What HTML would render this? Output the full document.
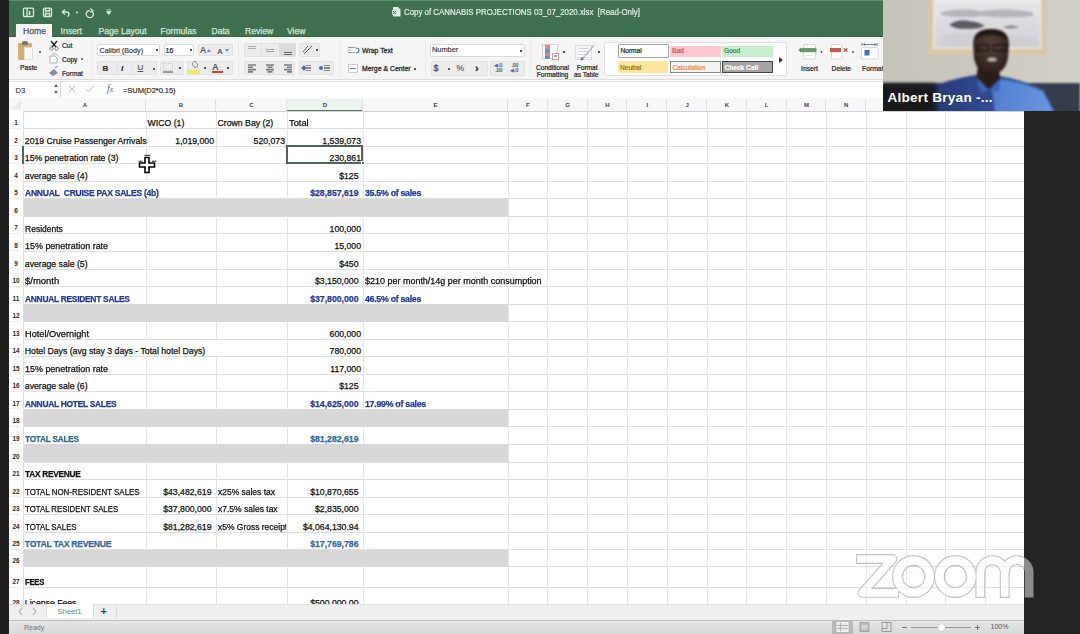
<!DOCTYPE html>
<html><head><meta charset="utf-8">
<style>
*{margin:0;padding:0;box-sizing:border-box}
html,body{width:1080px;height:634px;overflow:hidden;background:#fff;font-family:'Liberation Sans',sans-serif;}
.ab{position:absolute}
#leftstrip{position:absolute;left:0;top:0;width:9px;height:634px;background:#202020}
#title{position:absolute;left:9px;top:0;width:874px;height:37px;background:#3f7150;border-top:1px solid #5e9070;border-bottom:1px solid #33603f}
.tab{position:absolute;top:26px;font-size:8.6px;color:#d3e4d7;white-space:nowrap;-webkit-text-stroke:.25px currentColor}
#hometab{position:absolute;left:16px;top:24px;width:36px;height:14px;background:#f5f5f5}
#ribbon{position:absolute;left:9px;top:37px;width:1015px;height:43px;background:#f5f5f5;border-bottom:1px solid #dcdcdc}
.rt{position:absolute;font-size:6.8px;color:#222;white-space:nowrap;-webkit-text-stroke:.2px currentColor}
.box{position:absolute;background:#fff;border:1px solid #dadada;border-radius:2px}
.btn{position:absolute;background:#ececec;border:1px solid #e0e0e0;border-radius:2px}
#fbar{position:absolute;left:9px;top:80.5px;width:1015px;height:18px;background:#fff;border-top:1px solid #e4e4e4;border-bottom:1.5px solid #bdbdbd}
.fbt{position:absolute;font-size:7.6px;color:#111;white-space:nowrap;top:5px;-webkit-text-stroke:.25px currentColor}
#colhdr{position:absolute;left:9px;top:98px;width:1015px;height:13.5px;background:#f8f8f8;border-bottom:1px solid #d0d0d0}
.cn{position:absolute;top:101.5px;font-size:6px;color:#444;text-align:center;font-weight:bold}
.chl{position:absolute;top:99px;height:12px;width:1px;background:#e2e2e2}
#rowhdr{position:absolute;left:9px;top:111px;width:15px;height:497px;background:#fdfdfd;border-right:1px solid #dcdcdc}
.rn{position:absolute;left:9px;width:14px;font-size:6.4px;color:#2a2a2a;text-align:center;line-height:8px;font-weight:bold}
.rhl{position:absolute;left:9px;width:15px;height:1px;background:#f0f0f0}
.hl{position:absolute;left:24px;width:1000px;height:1px;background:#dedede}
.vl{position:absolute;top:111px;height:497px;width:1px;background:#e5e5e5}
.gr{position:absolute;left:24px;width:483.5px;background:#d7d7d7}
.c{position:absolute;font-size:8.7px;color:#111;white-space:nowrap;line-height:11px;-webkit-text-stroke:.25px currentColor}
.cover{position:absolute;background:#fff}
#tabs{position:absolute;left:9px;top:604px;width:1015px;height:16px;background:#efefef;border-top:1px solid #e0e0e0}
#status{position:absolute;left:9px;top:619.7px;width:1015px;height:14.3px;background:linear-gradient(#e6e6e6,#d9d9d9);border-top:1.2px solid #bcbcbc}
#rightdark{position:absolute;left:1024px;top:111px;width:56px;height:523px;background:#232323}
#video{position:absolute;left:883px;top:0;width:197px;height:111px;overflow:hidden;background:#c9c2b6}
</style></head><body>
<div id="leftstrip"></div>
<div id="title">
</div>
<svg class="ab" style="left:22px;top:6.5px" width="92" height="11" viewBox="0 0 92 11">
<g fill="none" stroke="#d9ebdd" stroke-width="1.3">
<rect x="1.5" y="1.2" width="10" height="8.3" rx="1"/><path d="M5 1.2v8.3"/><path d="M7.5 4v4" stroke-width="1.6"/>
<rect x="21.5" y="1.2" width="8" height="8.3" rx="1"/><path d="M23.5 1.2v2.8h4V1.2 M23.5 9.5V6.5h4v3"/>
<path d="M40 5 l3 -2.5 M40 5 l3 2.5 M40.5 5 h4 q2.5 0 2.5 2.5 q0 1.5 -1.5 2"/>
<path d="M67.5 3.5 a3.6 3.6 0 1 0 3 1.2 M68.5 1.5 l2.2 2.4 l-2.6 1.2"/>
</g>
<path d="M53.5 4.8 h3 l-1.5 2z" fill="#d9ebdd"/>
<path d="M84.5 2.8 h4.5 M84.5 4.6 h4.5 l-2.25 3z" stroke="#d9ebdd" stroke-width=".8" fill="#d9ebdd"/>
</svg>
<svg class="ab" style="left:392px;top:6px" width="9" height="11" viewBox="0 0 9 11"><path d="M1 1 h5 l2.5 2.5 v7 h-7.5z" fill="#e8efe9"/><rect x="0" y="4" width="5" height="5" fill="#cfdcd2"/><path d="M1 5 l3 3 M4 5 l-3 3" stroke="#3d6e4e" stroke-width=".8"/></svg>
<div id="hometab"></div>
<div class="tab" style="left:23px;color:#555">Home</div>
<div class="tab" style="left:60.5px">Insert</div>
<div class="tab" style="left:98.5px">Page Layout</div>
<div class="tab" style="left:160.5px">Formulas</div>
<div class="tab" style="left:211.5px">Data</div>
<div class="tab" style="left:245px">Review</div>
<div class="tab" style="left:287px">View</div>
<div class="ab" style="left:403.5px;top:7px;font-size:8.8px;color:#e3ece5;white-space:nowrap;transform:scaleX(.895);transform-origin:0 0;-webkit-text-stroke:.2px currentColor">Copy of CANNABIS PROJECTIONS 03_07_2020.xlsx&nbsp; [Read-Only]</div>

<div id="ribbon"></div>
<!-- paste -->
<div class="ab" style="left:18px;top:43px;width:14px;height:17px;background:#d7ad6a;border-radius:1px"></div>
<div class="ab" style="left:22px;top:41px;width:6px;height:4px;background:#777;border-radius:2px 2px 0 0"></div>
<div class="ab" style="left:24px;top:47px;width:9px;height:13px;background:#fafafa;border:1px solid #ddd"></div>
<div class="ab" style="left:39px;top:51px;width:2px;height:2px;background:#555;border-radius:1px"></div>
<div class="rt" style="left:20px;top:64px">Paste</div>
<!-- cut copy format -->
<svg class="ab" style="left:48px;top:40px" width="12" height="11" viewBox="0 0 12 11"><path d="M3 1 L8 7 M9 1 L4 7" stroke="#222" stroke-width="1.3" fill="none"/><circle cx="3.5" cy="8.5" r="1.6" fill="none" stroke="#666" stroke-width=".8"/><circle cx="8.5" cy="8.5" r="1.6" fill="none" stroke="#666" stroke-width=".8"/></svg>
<div class="rt" style="left:62px;top:42.2px;font-size:6.6px">Cut</div>
<svg class="ab" style="left:48px;top:53px" width="12" height="11" viewBox="0 0 12 11"><path d="M2 3 h5 l2 2 v5 h-7z" fill="#fff" stroke="#999" stroke-width=".8"/><path d="M4 1 h4 l2 2" fill="none" stroke="#aaa" stroke-width=".8"/></svg>
<div class="rt" style="left:62px;top:56.2px;font-size:6.6px">Copy</div>
<div class="ab" style="left:81px;top:58px;width:2px;height:2px;background:#555;border-radius:1px"></div>
<svg class="ab" style="left:48px;top:66px" width="12" height="11" viewBox="0 0 12 11"><path d="M1 7 L6 3 L10 7 L5 10z" fill="#8a86a8"/><path d="M7 2 L10 0" stroke="#999" stroke-width="1.2"/></svg>
<div class="rt" style="left:62px;top:70px;font-size:6.6px">Format</div>
<div class="ab" style="left:92px;top:40px;width:1px;height:37px;background:#ebebeb"></div>
<!-- font -->
<div class="box" style="left:97px;top:43.5px;width:63px;height:12.5px"></div>
<div class="rt" style="left:99.5px;top:46px;font-size:7.2px;color:#333;-webkit-text-stroke:.15px currentColor">Calibri (Body)</div>
<div class="ab" style="left:155.5px;top:49px;width:2px;height:2px;background:#555"></div>
<div class="box" style="left:163.5px;top:43.5px;width:30.5px;height:12.5px"></div>
<div class="rt" style="left:165.5px;top:46px;font-size:7.2px">16</div>
<div class="ab" style="left:189.5px;top:49px;width:2px;height:2px;background:#555"></div>
<div class="btn" style="left:198px;top:43.5px;width:34.5px;height:12.5px"></div>
<div class="rt" style="left:200px;top:45px;font-size:9px;color:#444">A</div>
<div class="ab" style="left:207px;top:48.5px;width:0;height:0;border-left:2px solid transparent;border-right:2px solid transparent;border-bottom:3px solid #5b8ac6"></div>
<div class="rt" style="left:217.5px;top:46.5px;font-size:7.5px;color:#444">A</div>
<div class="ab" style="left:224.5px;top:49px;width:0;height:0;border-left:2px solid transparent;border-right:2px solid transparent;border-top:3px solid #5b8ac6"></div>
<div class="btn" style="left:97px;top:60.5px;width:59.5px;height:14.5px"></div>
<div class="ab" style="left:117px;top:61px;width:1px;height:14px;background:#e2e2e2"></div>
<div class="ab" style="left:132px;top:61px;width:1px;height:14px;background:#e2e2e2"></div>
<div class="rt" style="left:102.5px;top:63.5px;font-size:8px;font-weight:bold;color:#333">B</div>
<div class="rt" style="left:121px;top:63.5px;font-size:8px;font-style:italic;font-weight:bold;color:#333">I</div>
<div class="rt" style="left:137.5px;top:63px;font-size:8px;color:#555;text-decoration:underline">U</div>
<div class="ab" style="left:152.5px;top:67.5px;width:2px;height:2px;background:#555"></div>
<div class="btn" style="left:160px;top:60.5px;width:23.5px;height:14.5px"></div>
<div class="ab" style="left:163px;top:71px;width:10px;height:1.5px;background:#999"></div>
<div class="ab" style="left:163px;top:63px;width:10px;height:8px;border:1px dotted #ccc"></div>
<div class="ab" style="left:179px;top:67px;width:2px;height:2px;background:#555"></div>
<div class="btn" style="left:187px;top:60.5px;width:45.5px;height:14.5px"></div>
<svg class="ab" style="left:188px;top:61px" width="13" height="10" viewBox="0 0 13 10"><path d="M4 3 L7 0 L10 4 L7 7 z" fill="#eee" stroke="#666" stroke-width=".8"/><path d="M9 5 q2 2 1 3" fill="#4a7fcf"/></svg>
<div class="ab" style="left:188px;top:70px;width:12px;height:4px;background:#f2ea5e"></div>
<div class="ab" style="left:204px;top:67px;width:2px;height:2px;background:#555"></div>
<div class="rt" style="left:212.5px;top:61.5px;font-size:8.5px;color:#333">A</div>
<div class="ab" style="left:211.5px;top:70.5px;width:11px;height:2.5px;background:#d63b2b"></div>
<div class="ab" style="left:227px;top:67px;width:2px;height:2px;background:#555"></div>
<div class="ab" style="left:238px;top:40px;width:1px;height:37px;background:#ebebeb"></div>
<!-- alignment -->
<div class="btn" style="left:243.5px;top:43px;width:52.5px;height:13.5px"></div>
<div class="ab" style="left:261px;top:43px;width:1px;height:13.5px;background:#e0e0e0"></div>
<div class="ab" style="left:279px;top:43px;width:17px;height:13.5px;background:#dcdcdc;border-radius:2px"></div>
<div class="ab" style="left:248px;top:45.5px;width:8px;height:1px;background:#aaa;box-shadow:0 2px 0 #aaa"></div>
<div class="ab" style="left:266px;top:49px;width:8px;height:1px;background:#aaa;box-shadow:0 2px 0 #aaa"></div>
<div class="ab" style="left:283.5px;top:51.5px;width:8px;height:1px;background:#666;box-shadow:0 2px 0 #666"></div>
<div class="btn" style="left:299px;top:43px;width:21px;height:13.5px"></div>
<svg class="ab" style="left:302px;top:44px" width="11" height="11" viewBox="0 0 11 11"><path d="M1 8 L6 2 M3 9 L8 4 M2 10 L10 2" stroke="#666" stroke-width="1"/></svg>
<div class="ab" style="left:316px;top:49px;width:2px;height:2px;background:#555"></div>
<div class="btn" style="left:243.5px;top:61px;width:51.5px;height:14px"></div>
<svg class="ab" style="left:247px;top:64px" width="48" height="9" viewBox="0 0 48 9"><g stroke="#7a7a7a" stroke-width="1.6">
<path d="M1 1h8 M1 3.3h5 M1 5.6h8 M1 7.9h5"/>
<path d="M19 1h8 M20.5 3.3h5 M19 5.6h8 M20.5 7.9h5"/>
<path d="M37 1h8 M40 3.3h5 M37 5.6h8 M40 7.9h5"/></g></svg>
<div class="btn" style="left:299px;top:61px;width:35px;height:14px"></div>
<div class="ab" style="left:302px;top:66px;width:4px;height:4px;background:#3f6fb8;transform:rotate(45deg)"></div>
<div class="ab" style="left:306px;top:64.5px;width:5px;height:7px;background:repeating-linear-gradient(#888 0 1.2px,transparent 1.2px 2.4px)"></div>
<div class="ab" style="left:319px;top:66px;width:4px;height:4px;background:#3f6fb8;border-radius:2px"></div>
<div class="ab" style="left:324px;top:64.5px;width:6px;height:7px;background:repeating-linear-gradient(#888 0 1.2px,transparent 1.2px 2.4px)"></div>
<div class="ab" style="left:339px;top:40px;width:1px;height:37px;background:#ebebeb"></div>
<!-- wrap/merge -->
<svg class="ab" style="left:347px;top:46px" width="14" height="8" viewBox="0 0 14 8"><path d="M1 1.5h7 M1 4h3 M1 6.5h7" stroke="#999" stroke-width="1"/><path d="M9 2 q3 0 3 2.5 q0 2.5 -3 2.5" fill="none" stroke="#4a7fcf" stroke-width="1.2"/></svg>
<div class="rt" style="left:362px;top:46.5px;color:#333;font-size:6.9px;-webkit-text-stroke:.3px currentColor">Wrap Text</div>
<div class="ab" style="left:348px;top:63.5px;width:10px;height:9px;background:#fff;border:1px solid #ccc"></div>
<div class="ab" style="left:350px;top:67.5px;width:6px;height:1px;background:#4a7fcf"></div>
<div class="rt" style="left:362px;top:64.5px;color:#333;font-size:6.9px;-webkit-text-stroke:.3px currentColor">Merge &amp; Center</div>
<div class="ab" style="left:414px;top:67.5px;width:2px;height:2px;background:#555"></div>
<div class="ab" style="left:425px;top:40px;width:1px;height:37px;background:#ebebeb"></div>
<!-- number -->
<div class="box" style="left:429.5px;top:43.5px;width:95.5px;height:13px"></div>
<div class="rt" style="left:432px;top:45px;font-size:7.4px;color:#333;-webkit-text-stroke:.15px currentColor">Number</div>
<div class="ab" style="left:519.5px;top:49.5px;width:2px;height:2px;background:#555"></div>
<div class="btn" style="left:430.5px;top:60.5px;width:57.5px;height:15.5px"></div>
<div class="rt" style="left:433.5px;top:62.5px;font-size:9px;color:#444">$</div>
<div class="ab" style="left:447.5px;top:67.5px;width:2px;height:2px;background:#555"></div>
<div class="rt" style="left:456.5px;top:62.5px;font-size:8.5px;color:#666">%</div>
<div class="rt" style="left:475px;top:61.5px;font-size:11px;color:#222;font-weight:bold">&#x203A;</div>
<div class="btn" style="left:489.5px;top:60.5px;width:35.5px;height:15.5px"></div>
<div class="rt" style="left:494px;top:62.5px;font-size:5px;color:#555;line-height:5.5px"><span style="color:#3f6fb8">&#9664;</span>.0<br>&nbsp;.00</div>
<div class="rt" style="left:510px;top:62.5px;font-size:5px;color:#555;line-height:5.5px">&nbsp;.00<br><span style="color:#3f6fb8">&#9664;</span>.0</div>
<div class="ab" style="left:530px;top:40px;width:1px;height:37px;background:#ebebeb"></div>
<!-- conditional formatting -->
<div class="ab" style="left:542px;top:44px;width:16px;height:15px;background:#fff;border:1px solid #e0c8c8"></div>
<div class="ab" style="left:545px;top:45px;width:5px;height:14px;background:linear-gradient(#d88 0 30%,#6a8fd0 30% 60%,#d88 60% 80%,#6a8fd0 80%)"></div>
<div class="ab" style="left:552px;top:53px;width:7px;height:7px;background:#fff;border:1px solid #d99;font-size:5px;line-height:5px;text-align:center;color:#333">=</div>
<div class="ab" style="left:562.5px;top:51px;width:2px;height:2px;background:#555"></div>
<div class="rt" style="left:536px;top:63.5px;text-align:center;line-height:7px;font-size:6.6px">Conditional<br>Formatting</div>
<div class="ab" style="left:575px;top:45px;width:17px;height:15px;background:#f4f4f8;border:1px solid #ddd"></div>
<div class="ab" style="left:578px;top:48px;width:10px;height:10px;background:repeating-linear-gradient(#c8d4ea 0 1px,#fff 1px 3px)"></div>
<svg class="ab" style="left:580px;top:44px" width="16" height="17" viewBox="0 0 16 17"><path d="M14 1 L6 11" stroke="#aaa" stroke-width="1.2"/><path d="M7 10 L3 15 L1 16 L4 12z" fill="#c8a850"/><path d="M1 16 l2 -2" stroke="#3f6fb8" stroke-width="2"/></svg>
<div class="ab" style="left:597.5px;top:51px;width:2px;height:2px;background:#555"></div>
<div class="rt" style="left:574px;top:63.5px;text-align:center;line-height:7px;font-size:6.6px">&nbsp;Format<br>as Table</div>
<!-- styles -->
<div class="ab" style="left:603.5px;top:41.5px;width:183px;height:34.5px;background:#fff;border:1px solid #dedede;border-radius:2px"></div>
<div class="ab" style="left:617.5px;top:43.5px;width:51.5px;height:14px;background:#fff;border:1.5px solid #9aa89c;border-radius:1px"></div>
<div class="rt" style="left:620.5px;top:46.5px;font-size:6.6px;color:#222">Normal</div>
<div class="ab" style="left:670px;top:45.5px;width:50.5px;height:11px;background:#ffc7ce"></div>
<div class="rt" style="left:672px;top:46.5px;font-size:6.6px;color:#b35a64">Bad</div>
<div class="ab" style="left:722px;top:45.5px;width:50.5px;height:11px;background:#c6efce"></div>
<div class="rt" style="left:724px;top:46.5px;font-size:6.6px;color:#3f7f4a">Good</div>
<div class="ab" style="left:617.5px;top:61px;width:50.5px;height:12px;background:#ffe69c"></div>
<div class="rt" style="left:620px;top:63.5px;font-size:6.6px;color:#8e6d1c">Neutral</div>
<div class="ab" style="left:670px;top:61px;width:50.5px;height:12px;background:#f2f2f2;border:1px solid #888"></div>
<div class="rt" style="left:672.5px;top:63.5px;font-size:6.6px;color:#e88a3a">Calculation</div>
<div class="ab" style="left:722px;top:61px;width:50.5px;height:12px;background:#a5a5a5;border:1.5px solid #444"></div>
<div class="rt" style="left:724.5px;top:63.5px;font-size:6.6px;color:#fff;font-weight:bold">Check Cell</div>
<div class="ab" style="left:778.5px;top:56.5px;width:0;height:0;border-top:3px solid transparent;border-bottom:3px solid transparent;border-left:4px solid #333"></div>
<!-- insert delete format -->
<svg class="ab" style="left:796px;top:42px" width="90" height="20" viewBox="796 42 90 20">
<rect x="803.5" y="44.5" width="12" height="14.5" rx="1.5" fill="#fff" stroke="#d8d8d8"/>
<path d="M806 55.5h7" stroke="#e4e4e4"/>
<rect x="802" y="48" width="14.5" height="4.2" fill="#6b9b6c"/>
<path d="M798.5 50.1 l2.3 -2.3 l2.3 2.3 l-2.3 2.3z" fill="#5d8f5e"/>
<circle cx="821.5" cy="52" r=".9" fill="#444"/>
<rect x="831.5" y="44.5" width="10.5" height="14.5" rx="1.5" fill="#fff" stroke="#d8d8d8"/>
<rect x="830" y="48" width="11" height="4.2" fill="#c65a54"/>
<path d="M843.8 48.3 l3.6 3.6 M847.4 48.3 l-3.6 3.6" stroke="#b8413c" stroke-width="1.1"/>
<circle cx="853" cy="52" r=".9" fill="#444"/>
<rect x="861.5" y="47.5" width="16.5" height="11.5" rx="1" fill="#fff" stroke="#d8d8d8"/>
<rect x="864.5" y="50" width="5" height="5.5" fill="#4a6fc0"/>
<path d="M862 43v3 M877 43v3 M863.5 44.5h12.5 M863.5 44.5l1.5 -1 M863.5 44.5l1.5 1 M876 44.5l-1.5 -1 M876 44.5l-1.5 1" stroke="#3f5f9f" stroke-width=".8" fill="none"/>
</svg>
<div class="rt" style="left:801px;top:64.5px">Insert</div>
<div class="rt" style="left:831.5px;top:64.5px">Delete</div>
<div class="rt" style="left:862px;top:64.5px">Format</div>


<div id="fbar"></div>
<div class="fbt" style="left:15.5px;top:86px;color:#333;-webkit-text-stroke:.1px currentColor">D3</div>
<div class="ab" style="left:59.5px;top:81px;width:1px;height:16px;background:#dadada"></div>
<div class="ab" style="left:53.5px;top:83.5px;width:0;height:0;border-left:2px solid transparent;border-right:2px solid transparent;border-bottom:3px solid #666"></div>
<div class="ab" style="left:53.5px;top:90.5px;width:0;height:0;border-left:2px solid transparent;border-right:2px solid transparent;border-top:3px solid #666"></div>
<svg class="ab" style="left:68px;top:84px" width="50" height="10" viewBox="0 0 50 10"><path d="M1 2 l6 6 M7 2 l-6 6" stroke="#c4c4c4" stroke-width="1"/><path d="M18 5 l2.5 3 l5 -6" stroke="#c4c4c4" stroke-width="1" fill="none"/></svg>
<div class="ab" style="left:107px;top:83.5px;font-family:'Liberation Serif';font-style:italic;font-size:9.5px;color:#666">f<span style="font-size:8px">x</span></div>

<div class="fbt" style="left:123px;top:86px;-webkit-text-stroke:.1px currentColor;letter-spacing:-.1px">=SUM(D2*0.15)</div>

<div id="colhdr"></div>
<div class="ab" style="left:287px;top:98.5px;width:76px;height:12.8px;background:#ecf2ee;border-bottom:1.8px solid #5d7766"></div>
<svg class="ab" style="left:11px;top:99px" width="11" height="11" viewBox="0 0 11 11"><path d="M10 1 L10 10 L1 10z" fill="#e8e8e8"/></svg>
<div class="cn" style="left:24.0px;width:122.0px">A</div>
<div class="chl" style="left:145.0px"></div>
<div class="cn" style="left:146.0px;width:70.0px">B</div>
<div class="chl" style="left:215.0px"></div>
<div class="cn" style="left:216.0px;width:71.0px">C</div>
<div class="chl" style="left:286.0px"></div>
<div class="cn" style="left:287.0px;width:76.0px">D</div>
<div class="chl" style="left:362.0px"></div>
<div class="cn" style="left:363.0px;width:145.0px">E</div>
<div class="chl" style="left:507.0px"></div>
<div class="cn" style="left:508.0px;width:39.8px">F</div>
<div class="chl" style="left:546.8px"></div>
<div class="cn" style="left:547.8px;width:39.8px">G</div>
<div class="chl" style="left:586.6px"></div>
<div class="cn" style="left:587.6px;width:39.8px">H</div>
<div class="chl" style="left:626.4px"></div>
<div class="cn" style="left:627.4px;width:39.8px">I</div>
<div class="chl" style="left:666.2px"></div>
<div class="cn" style="left:667.2px;width:39.8px">J</div>
<div class="chl" style="left:706.0px"></div>
<div class="cn" style="left:707.0px;width:39.8px">K</div>
<div class="chl" style="left:745.8px"></div>
<div class="cn" style="left:746.8px;width:39.8px">L</div>
<div class="chl" style="left:785.6px"></div>
<div class="cn" style="left:786.6px;width:39.8px">M</div>
<div class="chl" style="left:825.4px"></div>
<div class="cn" style="left:826.4px;width:39.8px">N</div>
<div class="chl" style="left:865.2px"></div>
<div class="cn" style="left:866.2px;width:39.8px">O</div>
<div class="chl" style="left:905.0px"></div>
<div class="cn" style="left:906.0px;width:39.8px">P</div>
<div class="chl" style="left:944.8px"></div>
<div class="cn" style="left:945.8px;width:39.8px">Q</div>
<div class="chl" style="left:984.6px"></div>
<div class="cn" style="left:985.6px;width:39.8px">R</div>
<div class="chl" style="left:1024.4px"></div>
<div id="rowhdr"></div>
<div class="rn" style="top:119.1px">1</div>
<div class="rhl" style="top:127.6px"></div>
<div class="rn" style="top:136.6px">2</div>
<div class="rhl" style="top:145.1px"></div>
<div class="rn" style="top:154.2px">3</div>
<div class="rhl" style="top:162.7px"></div>
<div class="rn" style="top:171.7px">4</div>
<div class="rhl" style="top:180.2px"></div>
<div class="rn" style="top:189.2px">5</div>
<div class="rhl" style="top:197.8px"></div>
<div class="rn" style="top:206.8px">6</div>
<div class="rhl" style="top:215.3px"></div>
<div class="rn" style="top:224.4px">7</div>
<div class="rhl" style="top:232.9px"></div>
<div class="rn" style="top:241.9px">8</div>
<div class="rhl" style="top:250.4px"></div>
<div class="rn" style="top:259.5px">9</div>
<div class="rhl" style="top:268.0px"></div>
<div class="rn" style="top:277.0px">10</div>
<div class="rhl" style="top:285.5px"></div>
<div class="rn" style="top:294.6px">11</div>
<div class="rhl" style="top:303.1px"></div>
<div class="rn" style="top:312.1px">12</div>
<div class="rhl" style="top:320.6px"></div>
<div class="rn" style="top:329.6px">13</div>
<div class="rhl" style="top:338.1px"></div>
<div class="rn" style="top:347.2px">14</div>
<div class="rhl" style="top:355.7px"></div>
<div class="rn" style="top:364.8px">15</div>
<div class="rhl" style="top:373.2px"></div>
<div class="rn" style="top:382.3px">16</div>
<div class="rhl" style="top:390.8px"></div>
<div class="rn" style="top:399.9px">17</div>
<div class="rhl" style="top:408.4px"></div>
<div class="rn" style="top:417.4px">18</div>
<div class="rhl" style="top:425.9px"></div>
<div class="rn" style="top:434.9px">19</div>
<div class="rhl" style="top:443.4px"></div>
<div class="rn" style="top:452.5px">20</div>
<div class="rhl" style="top:461.0px"></div>
<div class="rn" style="top:470.1px">21</div>
<div class="rhl" style="top:478.6px"></div>
<div class="rn" style="top:487.6px">22</div>
<div class="rhl" style="top:496.1px"></div>
<div class="rn" style="top:505.2px">23</div>
<div class="rhl" style="top:513.7px"></div>
<div class="rn" style="top:522.7px">24</div>
<div class="rhl" style="top:531.2px"></div>
<div class="rn" style="top:540.2px">25</div>
<div class="rhl" style="top:548.8px"></div>
<div class="rn" style="top:557.3px">26</div>
<div class="rhl" style="top:565.8px"></div>
<div class="rn" style="top:578.2px">27</div>
<div class="rhl" style="top:586.7px"></div>
<div class="rn" style="top:598.5px">28</div>
<div class="rhl" style="top:607.0px"></div>
<div class="ab" style="left:21.5px;top:146px;width:2px;height:18px;background:#51695a"></div>
<div class="hl" style="top:128.1px"></div>
<div class="hl" style="top:145.6px"></div>
<div class="hl" style="top:163.2px"></div>
<div class="hl" style="top:180.7px"></div>
<div class="hl" style="top:198.2px"></div>
<div class="hl" style="top:215.8px"></div>
<div class="hl" style="top:233.4px"></div>
<div class="hl" style="top:250.9px"></div>
<div class="hl" style="top:268.5px"></div>
<div class="hl" style="top:286.0px"></div>
<div class="hl" style="top:303.6px"></div>
<div class="hl" style="top:321.1px"></div>
<div class="hl" style="top:338.6px"></div>
<div class="hl" style="top:356.2px"></div>
<div class="hl" style="top:373.8px"></div>
<div class="hl" style="top:391.3px"></div>
<div class="hl" style="top:408.9px"></div>
<div class="hl" style="top:426.4px"></div>
<div class="hl" style="top:443.9px"></div>
<div class="hl" style="top:461.5px"></div>
<div class="hl" style="top:479.1px"></div>
<div class="hl" style="top:496.6px"></div>
<div class="hl" style="top:514.2px"></div>
<div class="hl" style="top:531.7px"></div>
<div class="hl" style="top:549.2px"></div>
<div class="hl" style="top:566.3px"></div>
<div class="hl" style="top:587.2px"></div>
<div class="hl" style="top:607.5px"></div>
<div class="vl" style="left:145.5px"></div>
<div class="vl" style="left:215.5px"></div>
<div class="vl" style="left:286.5px"></div>
<div class="vl" style="left:362.5px"></div>
<div class="vl" style="left:507.5px"></div>
<div class="vl" style="left:547.3px"></div>
<div class="vl" style="left:587.1px"></div>
<div class="vl" style="left:626.9px"></div>
<div class="vl" style="left:666.7px"></div>
<div class="vl" style="left:706.5px"></div>
<div class="vl" style="left:746.3px"></div>
<div class="vl" style="left:786.1px"></div>
<div class="vl" style="left:825.9px"></div>
<div class="vl" style="left:865.7px"></div>
<div class="vl" style="left:905.5px"></div>
<div class="vl" style="left:945.3px"></div>
<div class="vl" style="left:985.1px"></div>
<div class="vl" style="left:1024.9px"></div>
<div class="gr" style="top:198.8px;height:17.6px"></div>
<div class="gr" style="top:304.1px;height:17.6px"></div>
<div class="gr" style="top:409.4px;height:17.6px"></div>
<div class="gr" style="top:444.4px;height:17.6px"></div>
<div class="gr" style="top:549.8px;height:17.0px"></div>
<div class="cover" style="left:144.5px;top:181.8px;width:3px;height:16.4px"></div>
<div class="cover" style="left:144.5px;top:339.8px;width:3px;height:16.4px"></div>
<div class="cover" style="left:214.5px;top:339.8px;width:3px;height:16.4px"></div>
<div class="cover" style="left:506.5px;top:269.6px;width:3px;height:16.3px"></div>
<div class="ab" style="left:286.0px;top:145.1px;width:77.0px;height:18.6px;border:2px solid #4d6655"></div>
<div class="ab" style="left:360.5px;top:161.2px;width:4px;height:4px;background:#4d6655;border:1px solid #fff"></div>
<div class="c" style="left:147.6px;top:118.2px;">WICO (1)</div>
<div class="c" style="left:217.6px;top:118.2px;">Crown Bay (2)</div>
<div class="c" style="left:288.6px;top:118.2px;transform:scaleX(1.07);transform-origin:0 0;">Total</div>
<div class="c" style="left:24.8px;top:135.7px;">2019 Cruise Passenger Arrivals</div>
<div class="c r" style="right:866.0px;top:135.7px;">1,019,000</div>
<div class="c r" style="right:795.0px;top:135.7px;">520,073</div>
<div class="c r" style="right:719.0px;top:135.7px;">1,539,073</div>
<div class="c" style="left:24.8px;top:153.2px;">15% penetration rate (3)</div>
<div class="c r" style="right:719.0px;top:153.2px;">230,861</div>
<div class="c" style="left:24.8px;top:170.8px;">average sale (4)</div>
<div class="c r" style="right:721.5px;top:170.8px;">$125</div>
<div class="c" style="left:24.8px;top:188.3px;color:#1f3a9a;font-weight:bold;letter-spacing:-0.3px;transform:scaleX(0.99);transform-origin:0 0;">ANNUAL&nbsp; CRUISE PAX SALES (4b)</div>
<div class="c r" style="right:721.5px;top:188.3px;color:#1f3a9a;font-weight:bold;">$28,857,619</div>
<div class="c" style="left:364.6px;top:188.3px;color:#1f3a9a;font-weight:bold;letter-spacing:-0.3px;transform:scaleX(1.015);transform-origin:0 0;">35.5% of sales</div>
<div class="c" style="left:24.8px;top:223.5px;transform:scaleX(0.98);transform-origin:0 0;">Residents</div>
<div class="c r" style="right:719.0px;top:223.5px;">100,000</div>
<div class="c" style="left:24.8px;top:241.0px;transform:scaleX(1.03);transform-origin:0 0;">15% penetration rate</div>
<div class="c r" style="right:719.0px;top:241.0px;">15,000</div>
<div class="c" style="left:24.8px;top:258.6px;">average sale (5)</div>
<div class="c r" style="right:721.5px;top:258.6px;">$450</div>
<div class="c" style="left:24.8px;top:276.1px;transform:scaleX(1.09);transform-origin:0 0;">$/month</div>
<div class="c r" style="right:721.5px;top:276.1px;">$3,150,000</div>
<div class="c" style="left:364.6px;top:276.1px;transform:scaleX(1.033);transform-origin:0 0;">$210 per month/14g per month consumption</div>
<div class="c" style="left:24.8px;top:293.7px;color:#1f3a9a;font-weight:bold;letter-spacing:-0.3px;transform:scaleX(0.97);transform-origin:0 0;">ANNUAL RESIDENT SALES</div>
<div class="c r" style="right:721.5px;top:293.7px;color:#1f3a9a;font-weight:bold;">$37,800,000</div>
<div class="c" style="left:364.6px;top:293.7px;color:#1f3a9a;font-weight:bold;letter-spacing:-0.3px;transform:scaleX(1.015);transform-origin:0 0;">46.5% of sales</div>
<div class="c" style="left:24.8px;top:328.8px;transform:scaleX(1.06);transform-origin:0 0;">Hotel/Overnight</div>
<div class="c r" style="right:719.0px;top:328.8px;">600,000</div>
<div class="c" style="left:24.8px;top:346.3px;">Hotel Days (avg stay 3 days - Total hotel Days)</div>
<div class="c r" style="right:719.0px;top:346.3px;">780,000</div>
<div class="c" style="left:24.8px;top:363.9px;transform:scaleX(1.03);transform-origin:0 0;">15% penetration rate</div>
<div class="c r" style="right:719.0px;top:363.9px;">117,000</div>
<div class="c" style="left:24.8px;top:381.4px;">average sale (6)</div>
<div class="c r" style="right:721.5px;top:381.4px;">$125</div>
<div class="c" style="left:24.8px;top:399.0px;color:#1f3a9a;font-weight:bold;letter-spacing:-0.3px;transform:scaleX(0.97);transform-origin:0 0;">ANNUAL HOTEL SALES</div>
<div class="c r" style="right:721.5px;top:399.0px;color:#1f3a9a;font-weight:bold;">$14,625,000</div>
<div class="c" style="left:364.6px;top:399.0px;color:#1f3a9a;font-weight:bold;letter-spacing:-0.3px;transform:scaleX(1.02);transform-origin:0 0;">17.99% of sales</div>
<div class="c" style="left:24.8px;top:434.1px;color:#31699f;font-weight:bold;letter-spacing:-0.3px;transform:scaleX(0.96);transform-origin:0 0;">TOTAL SALES</div>
<div class="c r" style="right:721.5px;top:434.1px;color:#31699f;font-weight:bold;">$81,282,619</div>
<div class="c" style="left:24.8px;top:469.2px;font-weight:bold;letter-spacing:-0.3px;transform:scaleX(0.96);transform-origin:0 0;">TAX REVENUE</div>
<div class="c" style="left:24.8px;top:486.7px;transform:scaleX(0.912);transform-origin:0 0;">TOTAL NON-RESIDENT SALES</div>
<div class="c r" style="right:868.5px;top:486.7px;">$43,482,619</div>
<div class="c" style="left:217.6px;top:486.7px;transform:scaleX(0.975);transform-origin:0 0;">x25% sales tax</div>
<div class="c r" style="right:721.5px;top:486.7px;">$10,870,655</div>
<div class="c" style="left:24.8px;top:504.3px;transform:scaleX(0.9);transform-origin:0 0;">TOTAL RESIDENT SALES</div>
<div class="c r" style="right:868.5px;top:504.3px;">$37,800,000</div>
<div class="c" style="left:217.6px;top:504.3px;transform:scaleX(0.98);transform-origin:0 0;">x7.5% sales tax</div>
<div class="c r" style="right:721.5px;top:504.3px;">$2,835,000</div>
<div class="c" style="left:24.8px;top:521.8px;transform:scaleX(0.9);transform-origin:0 0;">TOTAL SALES</div>
<div class="c r" style="right:868.5px;top:521.8px;">$81,282,619</div>
<div class="c" style="left:217.6px;top:521.8px;transform:scaleX(0.975);transform-origin:0 0;width:70px;overflow:hidden;">x5% Gross receipt</div>
<div class="c r" style="right:721.5px;top:521.8px;">$4,064,130.94</div>
<div class="c" style="left:24.8px;top:539.4px;color:#31699f;font-weight:bold;letter-spacing:-0.3px;">TOTAL TAX REVENUE</div>
<div class="c r" style="right:721.5px;top:539.4px;color:#31699f;font-weight:bold;">$17,769,786</div>
<div class="c" style="left:24.8px;top:577.3px;font-weight:bold;letter-spacing:-0.3px;transform:scaleX(0.89);transform-origin:0 0;">FEES</div>
<div class="c" style="left:24.8px;top:597.6px;">License Fees</div>
<div class="c r" style="right:721.5px;top:597.6px;">$500,000.00</div>

<svg class="ab" style="left:136px;top:153px" width="24" height="22" viewBox="136 153 24 22">
<path d="M145 157.5 h4 v5.5 h5.5 v4 h-5.5 v5.5 h-4 v-5.5 h-5.5 v-4 h5.5z" fill="#fff" stroke="#000" stroke-width="1.6"/>
<path d="M144.5 155.3 h6 M138.5 161.2 h4 M152 161.2 h4.5" stroke="#222" stroke-width="1"/>
</svg>
<div id="tabs"></div>
<div id="status"></div>
<div class="ab" style="left:24px;top:624px;font-size:7px;color:#777">Ready</div>

<div class="ab" style="left:45.5px;top:604px;width:48px;height:13.5px;background:#fff;border-right:1px solid #dcdcdc;border-left:1px solid #e2e2e2"></div>
<div class="ab" style="left:57.5px;top:606.5px;font-size:7.6px;color:#5f8e70">Sheet1</div>
<div class="ab" style="left:100.5px;top:604.5px;font-size:11px;color:#444;font-weight:bold">+</div>
<div class="ab" style="left:116px;top:605px;width:1px;height:13px;background:#dadada"></div>
<svg class="ab" style="left:17px;top:607px" width="22" height="9" viewBox="0 0 22 9"><path d="M5 1 l-3 3.5 l3 3.5 M16 1 l3 3.5 l-3 3.5" stroke="#b8b8b8" stroke-width="1.2" fill="none"/></svg>
<div class="ab" style="left:832px;top:620px;width:21px;height:14px;background:#b9b9b9"></div>
<svg class="ab" style="left:836px;top:622px" width="14" height="10" viewBox="0 0 14 10"><rect x="1" y=".5" width="11" height="9" fill="#e8e8e8" stroke="#fff" stroke-width=".8"/><path d="M1 3.5h11 M1 6.5h11 M4.5 .5v9" stroke="#aaa" stroke-width=".8"/></svg>
<svg class="ab" style="left:858px;top:622px" width="14" height="10" viewBox="0 0 14 10"><rect x="2" y=".5" width="9" height="9" fill="#bbb" stroke="#999" stroke-width=".8"/><path d="M3.5 4h6 M3.5 6h6" stroke="#eee" stroke-width="1"/></svg>
<svg class="ab" style="left:880px;top:622px" width="14" height="10" viewBox="0 0 14 10"><rect x="2" y=".5" width="9" height="9" fill="none" stroke="#999" stroke-width="1"/><path d="M2 6.5h5v-6" stroke="#999" stroke-width="1" fill="none"/></svg>
<div class="ab" style="left:902px;top:626.5px;width:5px;height:1.5px;background:#777"></div>
<div class="ab" style="left:911px;top:626.5px;width:60px;height:1.5px;background:#999"></div>
<div class="ab" style="left:937.5px;top:623.5px;width:7px;height:7px;background:#fff;border-radius:50%;box-shadow:0 0 1px #888"></div>
<div class="ab" style="left:975px;top:626.5px;width:5px;height:1.5px;background:#777"></div>
<div class="ab" style="left:976.75px;top:624.75px;width:1.5px;height:5px;background:#777"></div>
<div class="ab" style="left:990.5px;top:623px;font-size:7px;color:#555">100%</div>
<div id="rightdark"></div>
<div id="video">
<svg width="197" height="111" viewBox="0 0 197 111" style="position:absolute;left:0;top:0">
<defs>
<filter id="bl" x="-10%" y="-10%" width="120%" height="120%"><feGaussianBlur stdDeviation="1"/></filter>
<filter id="bl3" x="-30%" y="-30%" width="160%" height="160%"><feGaussianBlur stdDeviation="2"/></filter>
<linearGradient id="wall" x1="0" x2="1" y1="0" y2="0"><stop offset="0" stop-color="#c6c3bb"/><stop offset=".45" stop-color="#cac7bf"/><stop offset="1" stop-color="#d3d0c8"/></linearGradient>
<linearGradient id="shirtL" x1="0" x2="1" y1="0" y2="0"><stop offset="0" stop-color="#243468"/><stop offset=".5" stop-color="#30498f"/><stop offset="1" stop-color="#3f62b0"/></linearGradient>
<linearGradient id="shirtR" x1="0" x2="1" y1="0" y2="0"><stop offset="0" stop-color="#4f7fd0"/><stop offset="1" stop-color="#6a96e0"/></linearGradient>
<radialGradient id="face" cx=".5" cy=".35" r=".65"><stop offset="0" stop-color="#55423a"/><stop offset=".7" stop-color="#392a24"/><stop offset="1" stop-color="#2a1e19"/></radialGradient>
<linearGradient id="paint" x1="0" x2="0" y1="0" y2="1"><stop offset="0" stop-color="#e9e9eb"/><stop offset=".5" stop-color="#dcdce0"/><stop offset="1" stop-color="#d2d2d8"/></linearGradient>
</defs>
<rect width="197" height="111" fill="url(#wall)"/>
<g filter="url(#bl)">
<path d="M45 -2 L163 -2 L163 55 L45 55z" fill="#d9c8a6"/>
<path d="M50 -2 L158.5 -2 L158.5 49 L50 49z" fill="#ece6d8"/><path d="M52 -2 L157 -2 L157 47.5 L52 47.5z" fill="url(#paint)"/>
<path d="M58 12 q20 -5 40 -1 q25 -4 52 1 l0 4 q-26 3 -52 0 q-20 3 -40 -1z" fill="#b4b4bc"/>
<path d="M66 25 q8 -7 22 -4 q10 1 14 5 q-8 4 -18 3 q-12 1 -18 -4z" fill="#5c5c68"/>
<path d="M120 27 q8 -3 16 0 q-8 3 -16 0z" fill="#777783"/>
<path d="M60 35 q35 -5 95 3 l0 9 l-95 0z" fill="#cfcfd5"/>
</g>
<g filter="url(#bl)">
<rect x="0" y="83" width="197" height="30" fill="#353e4c"/>

<path d="M30 112 L42 90 Q65 79 92 75 L112 75 Q142 80 160 90 L172 112z" fill="url(#shirtL)"/>
<path d="M108 78 Q140 82 160 92 L170 112 L112 112z" fill="url(#shirtR)"/>
<path d="M95 66 L115 66 L118 80 L106 90 L93 80z" fill="#2a1e18"/>
<path d="M93 77 L106 90 L98 92z M118 78 L106 90 L116 92z" fill="#3e63b8"/>
<path d="M90 44 q0 -15 18 -15 q18 0 18 15 l-1 14 q-3 16 -17 16 q-14 0 -17 -16z" fill="url(#face)"/>
<path d="M91 40 q3 -11 17 -11 q14 0 17 11 q-8 -5 -17 -5 q-9 0 -17 5z" fill="#231914"/>
<path d="M94 45 h12 v5.5 h-12z M110 45 h14 v5.5 h-14z" fill="none" stroke="#141010" stroke-width="1.3"/>
<ellipse cx="109" cy="59.5" rx="4.5" ry="1.8" fill="#bdb0a6"/>
</g>
<rect x="-5" y="84" width="58" height="30" fill="#161616" opacity=".92" filter="url(#bl3)"/>
<text x="4.4" y="101.6" font-family="Liberation Sans" font-weight="bold" font-size="13.6" fill="#fff" letter-spacing=".25">Albert Bryan -...</text>
</svg>

</div>
<svg class="ab" style="left:850px;top:545px" width="200" height="60" viewBox="850 545 200 60">
<defs>
<clipPath id="cw"><rect x="850" y="545" width="174" height="60"/></clipPath>
<clipPath id="cd"><rect x="1024" y="545" width="30" height="60"/></clipPath>
<mask id="ring" maskUnits="userSpaceOnUse" x="850" y="545" width="200" height="60">
<g fill="none" stroke="#fff"><path d="M861 559 H892.5 L862.5 592.8 H894" stroke-width="9.9" stroke-linejoin="round" stroke-linecap="square"/>
<circle cx="913.6" cy="576.5" r="16.0" stroke-width="10.9"/>
<circle cx="955.4" cy="576.5" r="16.0" stroke-width="10.9"/>
<path d="M980.3 593 V572.3 A12.2 12.2 0 0 1 1004.7 572.3 V593 M1004.7 572.3 A12.2 12.2 0 0 1 1029.1 572.3 V593" stroke-width="9.9" stroke-linejoin="round" stroke-linecap="square"/></g>
<g fill="none" stroke="#000"><path d="M861 559 H892.5 L862.5 592.8 H894" stroke-width="7.700000000000001" stroke-linejoin="round" stroke-linecap="square"/>
<circle cx="913.6" cy="576.5" r="16.0" stroke-width="8.700000000000001"/>
<circle cx="955.4" cy="576.5" r="16.0" stroke-width="8.700000000000001"/>
<path d="M980.3 593 V572.3 A12.2 12.2 0 0 1 1004.7 572.3 V593 M1004.7 572.3 A12.2 12.2 0 0 1 1029.1 572.3 V593" stroke-width="7.700000000000001" stroke-linejoin="round" stroke-linecap="square"/></g>
</mask>
</defs>
<g clip-path="url(#cw)">
<g fill="none" stroke="#fff" opacity=".55"><path d="M861 559 H892.5 L862.5 592.8 H894" stroke-width="8.3" stroke-linejoin="round" stroke-linecap="square"/>
<circle cx="913.6" cy="576.5" r="16.0" stroke-width="9.3"/>
<circle cx="955.4" cy="576.5" r="16.0" stroke-width="9.3"/>
<path d="M980.3 593 V572.3 A12.2 12.2 0 0 1 1004.7 572.3 V593 M1004.7 572.3 A12.2 12.2 0 0 1 1029.1 572.3 V593" stroke-width="8.3" stroke-linejoin="round" stroke-linecap="square"/></g>
<rect x="850" y="545" width="200" height="60" fill="#c2c2c2" mask="url(#ring)"/>
</g>
<g clip-path="url(#cd)" fill="none" stroke="#8b8b8b"><path d="M861 559 H892.5 L862.5 592.8 H894" stroke-width="8.8" stroke-linejoin="round" stroke-linecap="square"/>
<circle cx="913.6" cy="576.5" r="16.0" stroke-width="9.8"/>
<circle cx="955.4" cy="576.5" r="16.0" stroke-width="9.8"/>
<path d="M980.3 593 V572.3 A12.2 12.2 0 0 1 1004.7 572.3 V593 M1004.7 572.3 A12.2 12.2 0 0 1 1029.1 572.3 V593" stroke-width="8.8" stroke-linejoin="round" stroke-linecap="square"/></g>
</svg>
</body></html>
